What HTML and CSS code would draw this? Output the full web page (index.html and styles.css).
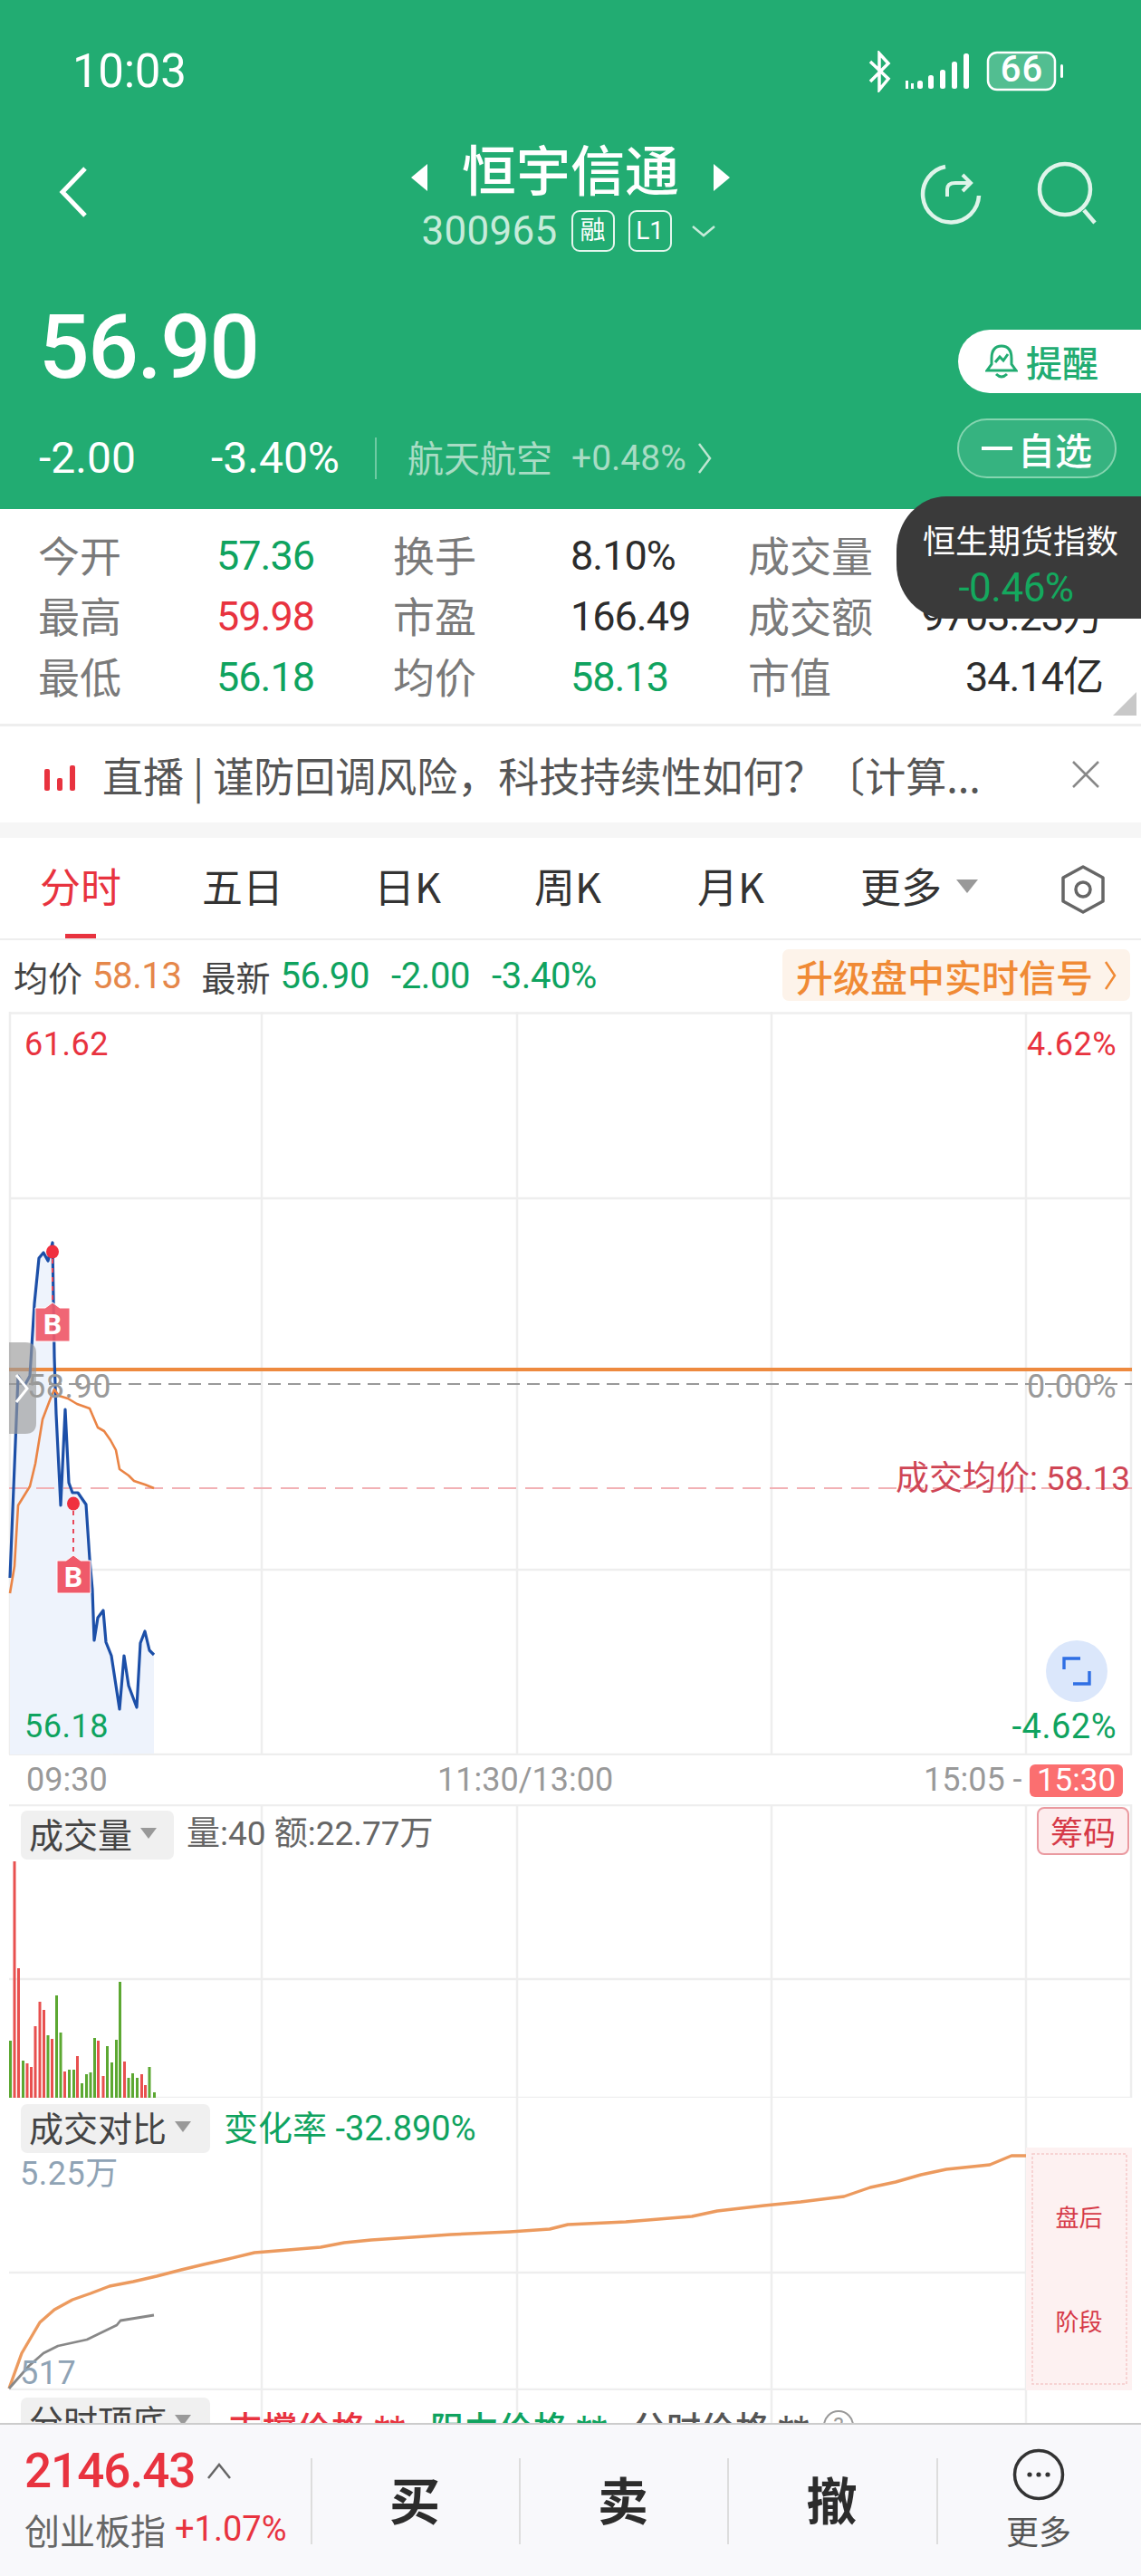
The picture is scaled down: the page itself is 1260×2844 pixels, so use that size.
FILE: index.html
```html
<!DOCTYPE html>
<html lang="zh-CN">
<head>
<meta charset="utf-8">
<title>恒宇信通</title>
<link rel="stylesheet" href="styles.css">
</head>
<body>
<div class="page">
  <div class="scroll">
    <header class="head">
      <div class="status">
        <span class="clock">10:03</span>
        <svg class="status-icons" width="220" height="46" viewBox="0 0 220 46">
          <path d="M3 12 L23 31 L13 43 V3 L23 14 L3 34" fill="none" stroke="#fff" stroke-width="3.5"/>
          <g fill="#fff"><rect x="42" y="33" width="3" height="9"/><rect x="48" y="36" width="3" height="6"/><rect x="55" y="33" width="6" height="9" rx="2.5"/><rect x="67" y="27" width="6" height="15" rx="2.5"/><rect x="80" y="21" width="6" height="21" rx="2.5"/><rect x="93" y="12" width="6" height="30" rx="2.5"/><rect x="106" y="3" width="6" height="39" rx="2.5"/></g>
          <rect x="133" y="2" width="74" height="41" rx="10" fill="rgba(255,255,255,.22)" stroke="#fff" stroke-width="2.5"/>
          <rect x="213" y="15" width="3" height="15" rx="1.5" fill="#fff"/>
        </svg>
        <span class="batt">66</span>
      </div>
      <div class="nav">
        <svg class="back" width="34" height="58" viewBox="0 0 34 58"><path d="M30 3 L5 29 L30 55" fill="none" stroke="#fff" stroke-width="5"/></svg>
        <div class="nav-mid">
          <div class="title-row">
            <svg class="tri" width="22" height="32" viewBox="0 0 22 32"><path d="M20 1 V31 L2 16 Z" fill="#fff"/></svg>
            <span class="title">恒宇信通</span>
            <svg class="tri" width="22" height="32" viewBox="0 0 22 32"><path d="M2 1 V31 L20 16 Z" fill="#fff"/></svg>
          </div>
          <div class="sub-row">
            <span class="code">300965</span>
            <span class="tag">融</span>
            <span class="tag">L1</span>
            <svg class="down" width="28" height="14" viewBox="0 0 28 14"><path d="M2 2 L14 12 L26 2" fill="none" stroke="#c6ebda" stroke-width="2.5"/></svg>
          </div>
        </div>
        <svg class="ref" width="70" height="70" viewBox="0 0 70 70"><path d="M29 3 A31 31 0 1 0 66 35" fill="none" stroke="#dff4ea" stroke-width="4.5"/><path d="M31 36 V28 Q31 21 40 21 H56 M48 12 L57 21 L48 30" fill="none" stroke="#dff4ea" stroke-width="4"/></svg>
        <svg class="search" width="72" height="72" viewBox="0 0 72 72"><circle cx="31" cy="31" r="28" fill="none" stroke="#dff4ea" stroke-width="4.5"/><path d="M52 54 L64 68" stroke="#dff4ea" stroke-width="4.5"/></svg>
      </div>
      <div class="quote">
        <div class="quote-left">
          <div class="price">56.90</div>
          <div class="chg-row">
            <span class="chg c1">-2.00</span>
            <span class="chg c2">-3.40%</span>
            <span class="vbar"></span>
            <span class="sector">航天航空</span>
            <span class="sector-pct">+0.48%</span>
            <svg width="16" height="36" viewBox="0 0 16 36"><path d="M2 2 L14 18 L2 34" fill="none" stroke="#bfe6d3" stroke-width="2.5"/></svg>
          </div>
        </div>
        <div class="quote-right">
          <div class="remind">
            <svg width="36" height="40" viewBox="0 0 36 40"><path d="M18 3 C9 3 7 10 7 17 V23 L2 30 H34 L29 23 V17 C29 10 27 3 18 3 Z M12 34 Q18 40 24 34" fill="none" stroke="#22ac72" stroke-width="3"/><path d="M11 21 L16 15 L20 19 L25 12" fill="none" stroke="#22ac72" stroke-width="3"/></svg>
            <span>提醒</span>
          </div>
          <div class="fav"><span class="minus"></span>自选</div>
        </div>
      </div>
    </header>

    <section class="stats">
      <span class="lb">今开</span><span class="num green">57.36</span><span class="lb">换手</span><span class="num">8.10%</span><span class="lb">成交量</span><span class="num right"></span>
      <span class="lb">最高</span><span class="num red">59.98</span><span class="lb">市盈</span><span class="num">166.49</span><span class="lb">成交额</span><span class="num right">9703.23万</span>
      <span class="lb">最低</span><span class="num green">56.18</span><span class="lb">均价</span><span class="num green">58.13</span><span class="lb">市值</span><span class="num right">34.14亿</span>
      <span class="corner"></span>
    </section>
    <div class="hsi">
      <span class="hsi-name">恒生期货指数</span>
      <span class="hsi-val">-0.46%</span>
    </div>

    <section class="news">
      <svg width="36" height="40" viewBox="0 0 36 40"><rect x="1" y="14" width="6" height="24" rx="2" fill="#e8333f"/><rect x="15" y="24" width="6" height="14" rx="2" fill="#e8333f"/><rect x="29" y="10" width="6" height="28" rx="2" fill="#e8333f"/></svg>
      <span class="news-text">直播 | 谨防回调风险，科技持续性如何？〔计算...</span>
      <svg class="close" width="32" height="32" viewBox="0 0 32 32"><path d="M2 2 L30 30 M30 2 L2 30" stroke="#888" stroke-width="2.5"/></svg>
    </section>
    <div class="band"></div>

    <nav class="tabs">
      <span class="tab active">分时</span>
      <span class="tab">五日</span>
      <span class="tab">日K</span>
      <span class="tab">周K</span>
      <span class="tab">月K</span>
      <span class="tab more">更多<i class="caret big"></i></span>
      <svg class="hex" width="50" height="54" viewBox="0 0 50 54"><path d="M25 2 L47 14 V40 L25 52 L3 40 V14 Z" fill="none" stroke="#666" stroke-width="3.5" stroke-linejoin="round"/><circle cx="25" cy="27" r="8" fill="none" stroke="#666" stroke-width="3.5"/></svg>
    </nav>

    <section class="info">
      <span class="i-lb">均价</span><span class="i-v orange">58.13</span>
      <span class="i-lb gap1">最新</span><span class="i-v green">56.90</span>
      <span class="i-v green gap2">-2.00</span><span class="i-v green gap2">-3.40%</span>
      <span class="upgrade">升级盘中实时信号
        <svg width="14" height="34" viewBox="0 0 14 34"><path d="M2 2 L12 17 L2 32" fill="none" stroke="#f08a35" stroke-width="2.5"/></svg>
      </span>
    </section>

    <section class="panel p-price">
      <svg class="canvas" width="1260" height="821" viewBox="0 1117 1260 821">
        <path class="grid" d="M10 1118.5 H1250 M10 1323 H1250 M10 1733 H1250 M10 1937 H1250 M11 1117 V1937 M289 1117 V1937 M571 1117 V1937 M852 1117 V1937 M1133 1117 V1937 M1249 1117 V1937"/>
        <path fill="#eef3fc" d="M11 1937 V1742 L20 1519 L27 1530 L33 1519 L38 1439 L43 1389 L48 1383 L53 1392 L58 1372 L60 1498 L62 1561 L67 1662 L72 1556 L76 1637 L80 1648 L86 1648 L95 1661 L99 1721 L102 1755 L104 1811 L108 1786 L114 1778 L117 1813 L123 1828 L132 1887 L137 1828 L142 1861 L151 1885 L155 1814 L160 1801 L165 1822 L170 1827 V1936 Z"/>
        <path d="M10 1528 H1250" stroke="#999" stroke-width="2" stroke-dasharray="14 8"/>
        <path d="M10 1643 H1250" stroke="#f2b1b5" stroke-width="2" stroke-dasharray="20 10"/>
        <path d="M10 1512 H1250" stroke="#ee8a3f" stroke-width="4"/>
        <path fill="none" stroke="#1c4fa8" stroke-width="3.2" stroke-linejoin="round" d="M11 1742 L20 1519 L27 1530 L33 1519 L38 1439 L43 1389 L48 1383 L53 1392 L58 1372 L60 1498 L62 1561 L67 1662 L72 1556 L76 1637 L80 1648 L86 1648 L95 1661 L99 1721 L102 1755 L104 1811 L108 1786 L114 1778 L117 1813 L123 1828 L132 1887 L137 1828 L142 1861 L151 1885 L155 1814 L160 1801 L165 1822 L170 1827"/>
        <path fill="none" stroke="#ea8445" stroke-width="2.6" stroke-linejoin="round" d="M11 1759 L16 1729 L20 1662 L33 1641 L39 1616 L47 1567 L55 1546 L60 1534 L65 1541 L75 1544 L85 1550 L99 1555 L108 1576 L115 1580 L122 1590 L128 1601 L132 1622 L142 1629 L148 1635 L160 1639 L170 1643"/>
        <path d="M58 1390 V1438 M81 1668 V1722" stroke="#e8485a" stroke-width="2" stroke-dasharray="5 5"/>
        <ellipse cx="58" cy="1382" rx="7" ry="7.5" fill="#f0303f"/>
        <ellipse cx="81" cy="1660" rx="7" ry="7.5" fill="#f0303f"/>
        <path fill="#ef5a6a" fill-opacity=".93" stroke="#fff" stroke-width="1" d="M39 1444 H50 L58 1438 L66 1444 H77 V1481 H39 Z"/>
        <path fill="#ef5a6a" stroke="#fff" stroke-width="1" d="M63 1723 H73 L81 1717 L89 1723 H100 V1759 H63 Z"/>
        <path fill="#9a9a9a" fill-opacity=".65" d="M10 1482 H28 Q40 1482 40 1494 V1571 Q40 1583 28 1583 H10 Z"/>
        <path d="M18 1518 L30 1533 L18 1548" fill="none" stroke="#fff" stroke-width="3"/>
      </svg>
      <span class="lab l-hi red">61.62</span>
      <span class="lab r-hi red">4.62%</span>
      <span class="lab l-mid">58.90</span>
      <span class="lab r-mid">0.00%</span>
      <span class="lab avg">成交均价: 58.13</span>
      <span class="lab l-lo green">56.18</span>
      <span class="lab r-lo green">-4.62%</span>
      <span class="bmark b1">B</span>
      <span class="bmark b2">B</span>
      <span class="expand">
        <svg width="32" height="32" viewBox="0 0 32 32"><path d="M2 14 V2 H20 M30 16 V30 H12" fill="none" stroke="#2f6fe4" stroke-width="3.4"/></svg>
      </span>
    </section>

    <section class="axis">
      <span class="ax-l">09:30</span>
      <span class="ax-m">11:30/13:00</span>
      <span class="ax-r">15:05 -</span>
      <span class="ax-badge">15:30</span>
    </section>

    <section class="panel p-vol">
      <svg class="canvas" width="1260" height="324" viewBox="0 1992 1260 324">
        <path class="grid" d="M10 1993 H1250 M10 2185 H1250 M10 2316 H1250 M289 1992 V2316 M571 1992 V2316 M852 1992 V2316 M1133 1992 V2316 M1249 1992 V2316"/>
        <g fill="#e8504f">
          <rect x="14.5" y="2055" width="3" height="262"/><rect x="19" y="2173" width="3" height="144"/><rect x="28.5" y="2278" width="3" height="39"/><rect x="33" y="2282" width="3" height="35"/><rect x="37.5" y="2237" width="3" height="80"/><rect x="42.5" y="2210" width="3" height="107"/><rect x="47" y="2219" width="3" height="98"/><rect x="56" y="2251" width="3" height="66"/><rect x="70" y="2287" width="3" height="30"/><rect x="84" y="2270" width="3" height="47"/><rect x="107" y="2253" width="3" height="64"/><rect x="112.5" y="2292" width="3" height="25"/><rect x="136" y="2276" width="3" height="41"/><rect x="155" y="2290" width="3" height="27"/><rect x="159" y="2302" width="3" height="15"/>
        </g>
        <g fill="#5ca832">
          <rect x="10" y="2253" width="3" height="64"/><rect x="24" y="2275" width="3" height="42"/><rect x="51.5" y="2247" width="3" height="70"/><rect x="61" y="2203" width="3" height="114"/><rect x="65.5" y="2244" width="3" height="73"/><rect x="75" y="2285" width="3" height="32"/><rect x="80" y="2285" width="3" height="32"/><rect x="89" y="2300" width="3" height="17"/><rect x="94" y="2290" width="3" height="27"/><rect x="98.5" y="2288" width="3" height="29"/><rect x="103" y="2250" width="3" height="67"/><rect x="117" y="2259" width="3" height="58"/><rect x="122" y="2277" width="3" height="40"/><rect x="127" y="2252" width="3" height="65"/><rect x="131" y="2188" width="3" height="129"/><rect x="140.5" y="2294" width="3" height="23"/><rect x="145" y="2289" width="3" height="28"/><rect x="150" y="2294" width="3" height="23"/><rect x="163.5" y="2282" width="3" height="35"/><rect x="169" y="2310" width="3" height="7"/>
        </g>
      </svg>
      <span class="chip c-vol">成交量<i class="caret"></i></span>
      <span class="vol-text">量:40 额:22.77万</span>
      <span class="chouma">筹码</span>
    </section>

    <section class="panel p-cmp">
      <svg class="canvas" width="1260" height="323" viewBox="0 2316 1260 323">
        <path class="grid" d="M10 2509 H1133 M10 2638 H1250 M289 2316 V2639 M571 2316 V2639 M852 2316 V2639 M1133 2316 V2639"/>
        <rect x="1133" y="2371" width="117" height="268" fill="#fdf1f1"/>
        <rect x="1140" y="2378" width="104" height="254" fill="none" stroke="#f5c9c9" stroke-width="1.5" stroke-dasharray="3 2"/>
        <path fill="none" stroke="#ec9a5e" stroke-width="3.4" stroke-linejoin="round" d="M10 2637 L24 2598 L44 2564 L60 2550 L80 2539 L100 2532 L121 2524 L147 2519 L173 2513 L200 2506 L225 2500 L252 2494 L281 2487 L318 2484 L354 2481 L380 2476 L410 2473 L455 2470 L498 2467 L563 2464 L607 2461 L627 2456 L691 2453 L764 2447 L792 2441 L844 2435 L884 2431 L932 2425 L961 2415 L989 2409 L1017 2401 L1045 2395 L1093 2390 L1117 2380 L1133 2380"/>
        <path fill="none" stroke="#888" stroke-width="2.8" stroke-linejoin="round" d="M10 2637 L32 2612 L48 2598 L64 2590 L96 2583 L129 2567 L133 2562 L170 2556"/>
      </svg>
      <span class="chip c-cmp">成交对比<i class="caret"></i></span>
      <span class="cmp-text">变化率 -32.890%</span>
      <span class="lab cmp-hi">5.25万</span>
      <span class="lab cmp-lo">517</span>
      <span class="stage s1">盘后</span>
      <span class="stage s2">阶段</span>
    </section>

    <section class="panel p-top">
      <svg class="canvas" width="1260" height="40" viewBox="0 2639 1260 40">
        <path class="grid" d="M289 2639 V2679 M571 2639 V2679 M852 2639 V2679 M1133 2639 V2679"/>
      </svg>
      <span class="chip c-top">分时顶底<i class="caret"></i></span>
      <span class="top-i t1 red">支撑价格 **</span>
      <span class="top-i t2 green">阻力价格 **</span>
      <span class="top-i t3">分时价格 **</span>
      <span class="help">?</span>
    </section>
  </div>

  <footer class="bar">
    <div class="idx">
      <div class="idx-top"><span class="idx-val">2146.43</span>
        <svg width="28" height="20" viewBox="0 0 28 20"><path d="M2 18 L14 3 L26 18" fill="none" stroke="#666" stroke-width="2.5"/></svg>
      </div>
      <div class="idx-bot"><span class="idx-name">创业板指</span><span class="idx-pct">+1.07%</span></div>
    </div>
    <div class="act">买</div>
    <div class="act">卖</div>
    <div class="act">撤</div>
    <div class="more-btn">
      <svg width="58" height="58" viewBox="0 0 58 58"><circle cx="29" cy="29" r="26.5" fill="none" stroke="#333" stroke-width="3.5"/><circle cx="19" cy="29" r="2.6" fill="#333"/><circle cx="29" cy="29" r="2.6" fill="#333"/><circle cx="39" cy="29" r="2.6" fill="#333"/></svg>
      <span>更多</span>
    </div>
  </footer>
</div>
</body>
</html>
```

FILE: styles.css
```css
* { box-sizing: border-box; }
html, body { margin: 0; padding: 0; background: #fff; }
body { font-family: Roboto, "Noto Sans CJK SC", sans-serif; color: #333; }
i { font-style: normal; }

.page { width: 1260px; height: 2844px; display: flex; flex-direction: column; overflow: hidden; }
.scroll { position: relative; flex: 1; min-height: 0; overflow: hidden; }

.red { color: #e8333f; }
.green { color: #0fa35f; }
.orange { color: #e5874a; }

/* header */
.head { height: 562px; background: #22ac72; color: #fff; padding-top: 54px; }
.status { position: relative; height: 50px; display: flex; align-items: center; justify-content: space-between; padding: 0 82px 0 80px; }
.clock { font-size: 51px; line-height: 52px; letter-spacing: -.3px; }
.status-icons { display: block; }
.batt { position: absolute; left: 1090px; width: 77px; top: 0; text-align: center; font-size: 40px; line-height: 46px; font-weight: 500; letter-spacing: 1px; }

.nav { position: relative; height: 130px; margin-top: 52px; }
.back { position: absolute; left: 64px; top: 27px; }
.nav-mid { display: flex; flex-direction: column; align-items: center; padding-top: 5px; }
.title-row { display: flex; align-items: center; gap: 36px; height: 69px; }
.title { font-family: "Noto Sans CJK SC", sans-serif; font-size: 60px; line-height: 74px; font-weight: 500; margin-bottom: 22px; }
.sub-row { display: flex; align-items: center; height: 50px; margin-left: -4px; }
.code { font-size: 44px; color: #c6ebda; letter-spacing: .3px; margin-right: 15px; }
.tag { width: 48px; height: 46px; border: 2px solid #e4f6ed; border-radius: 9px; font-size: 28px; line-height: 42px; text-align: center; margin-right: 15px; color: #fff; }
.down { margin-left: 6px; }
.ref { position: absolute; left: 1015px; top: 25px; }
.search { position: absolute; left: 1145px; top: 22px; }

.quote { position: relative; display: flex; justify-content: space-between; margin-top: 20px; }
.quote-left { padding-left: 43px; padding-top: 28px; }
.price { font-size: 98px; line-height: 100px; font-weight: 500; letter-spacing: -1.5px; }
.chg-row { display: flex; align-items: center; height: 50px; margin-top: 47px; }
.chg { font-size: 48px; line-height: 50px; letter-spacing: 0; }
.c1 { width: 190px; }
.c2 { width: 181px; }
.vbar { width: 2px; height: 46px; background: #6fcaa3; margin-right: 34px; }
.sector { font-family: "Noto Sans CJK SC", sans-serif; font-size: 40px; line-height: 46px; padding-bottom: 4px; color: #a8dcc4; margin-right: 21px; }
.sector-pct { font-size: 39px; color: #a8dcc4; margin-right: 12px; }
.quote-right { display: flex; flex-direction: column; align-items: flex-end; width: 203px; padding-top: 58px; }
.remind { width: 202px; height: 70px; background: #fff; border-radius: 35px 0 0 35px; display: flex; align-items: center; padding-left: 30px; gap: 9px; color: #22ac72; font-family: "Noto Sans CJK SC", sans-serif; font-size: 40px; font-weight: 500; }
.fav { width: 176px; height: 66px; margin-top: 28px; margin-right: 27px; background: #36b380; border: 2px solid #85d5b0; border-radius: 33px; display: flex; align-items: center; justify-content: center; font-family: "Noto Sans CJK SC", sans-serif; font-size: 41px; font-weight: 500; color: #fff; }
.minus { width: 34px; height: 4px; background: #fff; margin-right: 6px; }

/* stats */
.stats { position: relative; height: 240px; padding: 18px 0 18px 42px; display: grid; grid-template-columns: 197px 195px 196px 196px 196px 196px; grid-auto-rows: 67px; align-items: center; border-bottom: 3px solid #eee; }
.lb { font-family: "Noto Sans CJK SC", sans-serif; font-size: 46px; line-height: 63px; padding-bottom: 4px; color: #7a7a7a; }
.num { font-size: 45px; line-height: 67px; color: #2c2c2c; letter-spacing: -1px; }
.num.red { color: #e8333f; }
.num.green { color: #0fa35f; }
.right { justify-self: end; white-space: nowrap; }
.corner { position: absolute; right: 5px; bottom: 9px; width: 0; height: 0; border-style: solid; border-width: 0 0 26px 26px; border-color: transparent transparent #c8c8c8 transparent; }
.hsi { position: absolute; left: 990px; top: 548px; width: 270px; height: 135px; background: #3a3a3a; border-radius: 55px 0 0 55px / 60px 0 0 60px; display: flex; flex-direction: column; align-items: center; padding-top: 20px; padding-left: 4px; }
.hsi-name { font-family: "Noto Sans CJK SC", sans-serif; font-size: 36px; line-height: 54px; color: #fff; }
.hsi-val { font-size: 44px; line-height: 50px; color: #14a85e; margin-top: 2px; margin-left: -10px; letter-spacing: -.5px; }

/* news */
.news { height: 106px; display: flex; align-items: center; padding-left: 48px; position: relative; }
.news-text { font-family: "Noto Sans CJK SC", sans-serif; font-size: 45px; color: #555; margin-left: 29px; white-space: nowrap; }
.close { position: absolute; left: 1183px; top: 37px; }
.band { height: 17px; background: #f6f6f6; }

/* tabs */
.tabs { position: relative; height: 113px; border-bottom: 2px solid #eee; display: grid; grid-template-columns: 179px 190px 177px 180px 180px 1fr; padding: 20px 0 0 44px; font-family: "Noto Sans CJK SC", sans-serif; }
.tab { font-size: 45px; line-height: 66px; height: 66px; color: #333; display: flex; align-items: center; }
.tab.active { color: #e8333f; }
.tab.active::after { content: ""; position: absolute; left: 72px; bottom: 0; width: 34px; height: 5px; background: #e8333f; }
.caret { display: inline-block; width: 0; height: 0; border-style: solid; border-width: 12px 9px 0; border-color: #999 transparent transparent; margin-left: 9px; }
.caret.big { border-width: 15px 12px 0; margin-left: 16px; }
.hex { position: absolute; left: 1171px; top: 30px; }

/* info */
.info { height: 79px; display: flex; align-items: center; padding-left: 15px; position: relative; }
.i-lb { font-family: "Noto Sans CJK SC", sans-serif; font-size: 38px; color: #444; margin-right: 11px; }
.i-v { font-size: 40px; letter-spacing: -.4px; }
.gap1 { margin-left: 22px; }
.gap2 { margin-left: 24px; }
.upgrade { position: absolute; left: 864px; top: 10px; width: 384px; height: 57px; background: #fdf3ea; border-radius: 7px; display: flex; align-items: center; justify-content: center; gap: 12px; color: #f08a35; font-family: "Noto Sans CJK SC", sans-serif; font-size: 41px; font-weight: 500; }

/* panels */
.panel { position: relative; width: 1260px; overflow: hidden; }
.canvas { position: absolute; left: 0; top: 0; display: block; }
.grid { fill: none; stroke: #eee; stroke-width: 2.5; }
.p-price { height: 821px; }
.p-vol { height: 324px; }
.p-cmp { height: 323px; }
.p-top { height: 40px; }

.lab { position: absolute; font-size: 36px; line-height: 40px; white-space: nowrap; letter-spacing: .5px; }
.l-hi { left: 27px; top: 16px; }
.r-hi { right: 27px; top: 16px; }
.l-mid { left: 30px; top: 394px; color: #999; }
.r-mid { right: 27px; top: 394px; color: #999; }
.avg { right: 12px; top: 496px; color: #cf4555; font-size: 37px; letter-spacing: 0; }
.l-lo { left: 27px; top: 769px; }
.r-lo { right: 27px; top: 769px; font-size: 38px; }
.bmark { position: absolute; width: 38px; text-align: center; color: #fff; font-size: 32px; line-height: 37px; font-weight: 700; }
.b1 { left: 39px; top: 327px; }
.b2 { left: 62px; top: 606px; }
.expand { position: absolute; left: 1155px; top: 694px; width: 68px; height: 68px; border-radius: 50%; background: #dbe7fb; display: flex; align-items: center; justify-content: center; }

.axis { position: relative; height: 54px; font-size: 36px; color: #999; }
.ax-l { position: absolute; left: 29px; top: 7px; line-height: 40px; }
.ax-m { position: absolute; left: 483px; top: 7px; line-height: 40px; }
.ax-r { position: absolute; left: 1020px; top: 7px; line-height: 40px; }
.ax-badge { position: absolute; left: 1137px; top: 10px; width: 103px; height: 36px; background: #fb6f70; border-radius: 6px; color: #fff; text-align: center; line-height: 36px; font-size: 35px; }

.chip { position: absolute; left: 23px; height: 54px; background: #f0f0f0; border-radius: 7px; display: flex; align-items: center; padding: 0 0 4px 9px; font-family: "Noto Sans CJK SC", sans-serif; font-size: 38px; line-height: 48px; color: #444; }
.c-vol { top: 7px; width: 169px; }
.c-cmp { top: 7px; width: 209px; }
.c-top { top: 8px; width: 209px; }
.vol-text { position: absolute; left: 206px; top: 12px; font-size: 37px; line-height: 42px; color: #666; white-space: nowrap; }
.chouma { position: absolute; left: 1145px; top: 3px; width: 102px; height: 53px; background: #fdeced; border: 2px solid #ea9aa0; border-radius: 8px; color: #d63a48; font-family: "Noto Sans CJK SC", sans-serif; font-size: 36px; line-height: 48px; text-align: center; }
.cmp-text { position: absolute; left: 247px; top: 13px; font-size: 38px; line-height: 42px; color: #0fa35f; white-space: nowrap; }
.cmp-hi { left: 22px; top: 64px; color: #8fa3b5; }
.cmp-lo { left: 22px; top: 284px; color: #8fa3b5; }
.stage { position: absolute; left: 1133px; width: 117px; text-align: center; font-family: "Noto Sans CJK SC", sans-serif; font-size: 26px; line-height: 34px; color: #d63a48; }
.s1 { top: 114px; }
.s2 { top: 229px; }
.top-i { position: absolute; top: 20px; font-size: 38px; line-height: 46px; font-weight: 500; white-space: nowrap; color: #555; }
.t1 { left: 252px; color: #e8333f; }
.t2 { left: 475px; color: #0fa35f; }
.t3 { left: 698px; }
.help { position: absolute; left: 909px; top: 22px; width: 34px; height: 34px; border: 2px solid #999; border-radius: 50%; color: #999; font-size: 24px; line-height: 30px; text-align: center; }

/* bottom bar */
.bar { flex: none; height: 169px; background: #f8f8fb; border-top: 2px solid #ccc; display: grid; grid-template-columns: 343px 230px 230px 231px 1fr; position: relative; z-index: 2; }
.idx { padding: 24px 0 0 27px; }
.idx-top { display: flex; align-items: center; gap: 13px; height: 54px; }
.idx-val { font-size: 53px; line-height: 54px; color: #e8333f; font-weight: 500; letter-spacing: -1px; }
.idx-bot { display: flex; align-items: center; margin-top: 12px; height: 50px; }
.idx-name { font-family: "Noto Sans CJK SC", sans-serif; font-size: 39px; color: #666; margin-right: 10px; }
.idx-pct { font-size: 38px; color: #e8333f; }
.act { position: relative; display: flex; align-items: center; justify-content: center; padding-bottom: 6px; font-family: "Noto Sans CJK SC", sans-serif; font-size: 56px; font-weight: 700; color: #2c2c2c; }
.act::before { content: ""; position: absolute; left: 0; top: 37px; width: 2px; height: 95px; background: #ddd; }
.more-btn { position: relative; display: flex; flex-direction: column; align-items: center; padding-top: 26px; font-family: "Noto Sans CJK SC", sans-serif; font-size: 36px; color: #555; }
.more-btn::before { content: ""; position: absolute; left: 0; top: 37px; width: 2px; height: 95px; background: #ddd; }
.more-btn span { line-height: 52px; margin-top: 6px; }
```
